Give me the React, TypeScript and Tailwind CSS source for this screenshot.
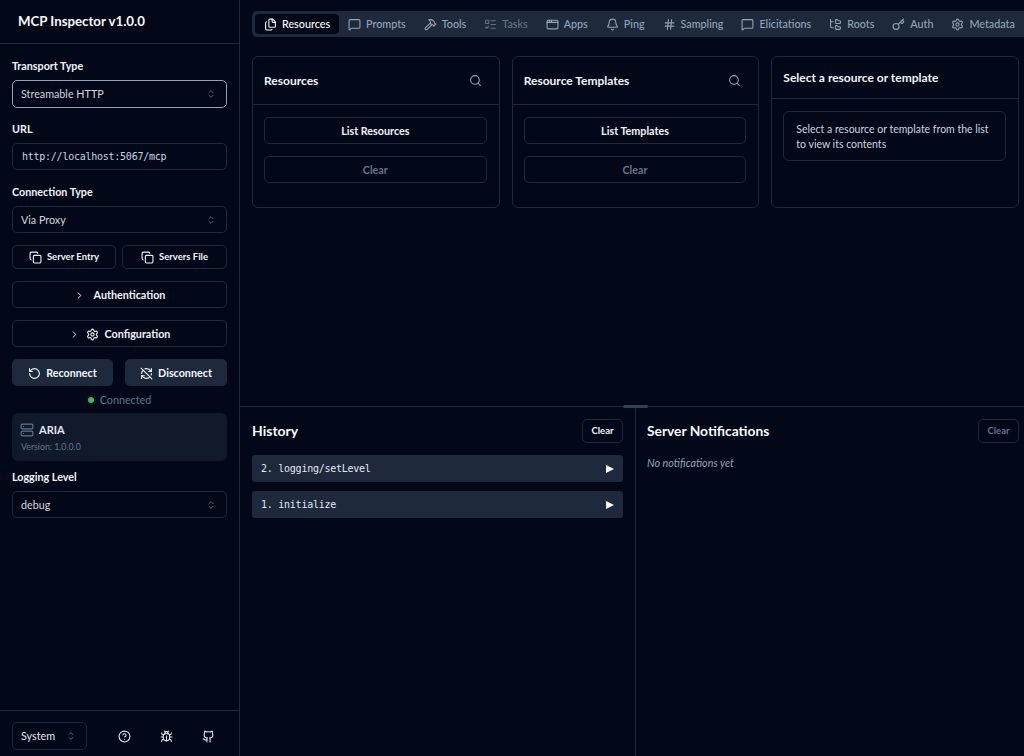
import {
  AppWindow,
  Bell,
  Bug,
  ChevronRight,
  ChevronsUpDown,
  CircleHelp,
  Copy,
  Files,
  FolderTree,
  Github,
  Hammer,
  Hash,
  Key,
  ListTodo,
  MessageSquare,
  RefreshCwOff,
  RotateCcw,
  Search,
  Server,
  Settings,
} from "lucide-react";
import React from "react";

const sans = "font-['Lato','Noto_Sans',sans-serif]";
const mono = "font-['DejaVu_Sans_Mono','Liberation_Mono',monospace]";

const tabs = [
  { name: "Resources", icon: Files, active: true },
  { name: "Prompts", icon: MessageSquare },
  { name: "Tools", icon: Hammer },
  { name: "Tasks", icon: ListTodo, disabled: true },
  { name: "Apps", icon: AppWindow },
  { name: "Ping", icon: Bell },
  { name: "Sampling", icon: Hash },
  { name: "Elicitations", icon: MessageSquare },
  { name: "Roots", icon: FolderTree },
  { name: "Auth", icon: Key },
  { name: "Metadata", icon: Settings },
];

const Label = ({ children }: { children: React.ReactNode }) => (
  <p className="text-[10.75px] leading-[14px] font-bold text-[#f1f5f9]">{children}</p>
);

const SelectBox = ({ value, focused }: { value: string; focused?: boolean }) => (
  <div
    className={`flex items-center justify-between rounded-[5px] border pl-[8px] pr-[10px] text-[10.75px] text-[#d4d7dd] ${
      focused ? "h-[28px] border-[#94a3b8]" : "h-[27px] border-[#1e293b] pt-[1px]"
    }`}
  >
    {value}
    <ChevronsUpDown size={10} className="text-[#64748b]" />
  </div>
);

const OutlineButton = ({
  children,
  className = "",
}: {
  children: React.ReactNode;
  className?: string;
}) => (
  <div
    className={`flex items-center justify-center rounded-[5px] border border-[#1e293b] pt-[1px] text-[10.75px] font-bold text-[#f1f5f9] ${className}`}
  >
    {children}
  </div>
);

const ListCard = ({ title, action }: { title: string; action: string }) => (
  <div className="flex h-[152px] flex-1 flex-col rounded-[6px] border border-[#1e293b]">
    <div className="flex h-[48px] items-center justify-between border-b border-[#1e293b] pl-[11px] pr-[17px]">
      <h3 className="text-[12px] font-bold text-[#f1f5f9]">{title}</h3>
      <Search size={13} className="text-[#94a3b8]" />
    </div>
    <div className="flex flex-col gap-[12px] pl-[11px] pr-[12px] pt-[12px]">
      <OutlineButton className="h-[27px]">{action}</OutlineButton>
      <OutlineButton className="h-[27px] !text-[#64748b]">Clear</OutlineButton>
    </div>
  </div>
);

const HistoryRow = ({ label }: { label: string }) => (
  <div className="flex h-[27px] items-center justify-between rounded-[3px] bg-[#1e293b] pl-[9px] pr-[9px]">
    <span className={`${mono} text-[10px] tracking-[-0.25px] text-[#e2e8f0]`}>{label}</span>
    <span className="h-0 w-0 border-y-[4px] border-l-[8px] border-y-transparent border-l-white" />
  </div>
);

export default function App() {
  return (
    <div className={`${sans} flex h-[756px] w-[1024px] overflow-hidden bg-[#020817]`}>
      <aside className="flex w-[240px] shrink-0 flex-col border-r border-[#1e293b]">
        <div className="flex h-[44px] shrink-0 items-center border-b border-[#1e293b] pl-[18px] text-[13.25px] font-bold text-[#f8fafc]">
          MCP Inspector v1.0.0
        </div>
        <div className="flex flex-1 flex-col px-[12px] pt-[15px]">
          <Label>Transport Type</Label>
          <div className="mt-[7px]">
            <SelectBox value="Streamable HTTP" focused />
          </div>
          <div className="mt-[14px]">
            <Label>URL</Label>
          </div>
          <div
            className={`${mono} mt-[7px] flex h-[27px] items-center rounded-[5px] border border-[#1e293b] pl-[9px] text-[10px] tracking-[-0.25px] text-[#cbd5e1]`}
          >
            http://localhost:5067/mcp
          </div>
          <div className="mt-[15px]">
            <Label>Connection Type</Label>
          </div>
          <div className="mt-[7px]">
            <SelectBox value="Via Proxy" />
          </div>
          <div className="mt-[12px] flex gap-[6px]">
            <OutlineButton className="h-[24px] w-[104px] gap-[5px] !pt-0 !text-[9.5px]">
              <Copy size={13} /> Server Entry
            </OutlineButton>
            <OutlineButton className="h-[24px] flex-1 gap-[5px] !pt-0 !text-[9.5px]">
              <Copy size={13} /> Servers File
            </OutlineButton>
          </div>
          <OutlineButton className="mt-[12px] h-[27px] gap-[9px]">
            <ChevronRight size={11} /> Authentication
          </OutlineButton>
          <OutlineButton className="mt-[12px] h-[27px] gap-[6px]">
            <ChevronRight size={11} />
            <Settings size={13} /> Configuration
          </OutlineButton>
          <div className="mt-[12px] flex gap-[12px]">
            <div className="flex h-[27px] w-[101px] items-center justify-center gap-[5px] rounded-[5px] bg-[#1e293b] pt-[1px] text-[10.75px] font-bold text-[#f1f5f9]">
              <RotateCcw size={13} /> Reconnect
            </div>
            <div className="flex h-[27px] flex-1 items-center justify-center gap-[5px] rounded-[5px] bg-[#1e293b] pt-[1px] text-[10.75px] font-bold text-[#f1f5f9]">
              <RefreshCwOff size={13} /> Disconnect
            </div>
          </div>
          <div className="mt-[7px] flex h-[14px] items-center justify-center gap-[6px] text-[10.75px] text-[#64748b]">
            <span className="h-[6px] w-[6px] rounded-full bg-[#22c55e]" />
            Connected
          </div>
          <div className="mt-[6px] flex h-[48px] flex-col justify-center gap-[2px] rounded-[6px] bg-[#111a2b] pl-[8px] pt-[1px]">
            <div className="flex items-center gap-[5px] text-[11px] font-bold text-[#e2e8f0]">
              <Server size={14} className="text-[#64748b]" />
              ARIA
            </div>
            <p className="pl-[1px] text-[8.75px] text-[#64748b]">Version: 1.0.0.0</p>
          </div>
          <div className="mt-[9px]">
            <Label>Logging Level</Label>
          </div>
          <div className="mt-[7px]">
            <SelectBox value="debug" />
          </div>
        </div>
        <div className="flex h-[46px] shrink-0 items-center border-t border-[#1e293b] pl-[12px] pt-[5px]">
          <div className="flex h-[28px] w-[75px] items-center justify-between rounded-[5px] border border-[#1e293b] pl-[8px] pr-[10px] text-[10.75px] text-[#e2e8f0]">
            System
            <ChevronsUpDown size={10} className="text-[#64748b]" />
          </div>
          <div className="ml-[31px] flex gap-[29px] text-[#e2e8f0]">
            <CircleHelp size={13} />
            <Bug size={13} />
            <Github size={13} />
          </div>
        </div>
      </aside>
      <main className="flex min-w-0 flex-1 flex-col">
        <div className="flex h-[406px] shrink-0 flex-col px-[12px] pt-[11px] pr-[5px]">
          <div className="mr-[-5px] flex h-[26px] items-center rounded-l-[5px] bg-[#1e293b] pl-[3px]">
            {tabs.map((tab) => {
              const Icon = tab.icon;
              return (
                <div
                  key={tab.name}
                  className={`flex h-[20px] items-center gap-[5px] rounded-[4px] px-[9px] text-[10.75px] font-medium whitespace-nowrap ${
                    tab.active
                      ? "bg-[#020817] text-[#f8fafc]"
                      : tab.disabled
                        ? "text-[#64748b]"
                        : "text-[#94a3b8]"
                  }`}
                >
                  <Icon size={13} />
                  {tab.name}
                </div>
              );
            })}
          </div>
          <div className="mt-[19px] flex gap-[12px]">
            <ListCard title="Resources" action="List Resources" />
            <ListCard title="Resource Templates" action="List Templates" />
            <div className="h-[152px] flex-1 rounded-[6px] border border-[#1e293b]">
              <div className="flex h-[42px] items-center border-b border-[#1e293b] pl-[11px] text-[12px] font-bold text-[#f1f5f9]">
                Select a resource or template
              </div>
              <div className="ml-[11px] mr-[12px] mt-[12px] h-[50px] rounded-[6px] border border-[#1e293b] px-[12px] pt-[10px] text-[10.5px] leading-[15px] text-[#cbd5e1]">
                Select a resource or template from the list to view its contents
              </div>
            </div>
          </div>
        </div>
        <div className="relative flex flex-1 border-t border-[#1e293b]">
          <span className="absolute left-[383px] top-[-2px] h-[3px] w-[25px] rounded-full bg-[#334155]" />
          <section className="w-[396px] shrink-0 border-r border-[#1e293b] px-[12px] pt-[12px]">
            <div className="flex h-[24px] items-center justify-between">
              <h2 className="pb-[2px] text-[14px] font-bold text-[#f8fafc]">History</h2>
              <OutlineButton className="h-[24px] w-[41px] !pt-0 !text-[9.5px]">Clear</OutlineButton>
            </div>
            <div className="mt-[12px] flex flex-col gap-[9px]">
              <HistoryRow label="2. logging/setLevel" />
              <HistoryRow label="1. initialize" />
            </div>
          </section>
          <section className="flex-1 pl-[11px] pr-[5px] pt-[12px]">
            <div className="flex h-[24px] items-center justify-between">
              <h2 className="text-[13.8px] font-bold text-[#f8fafc]">Server Notifications</h2>
              <OutlineButton className="h-[24px] w-[41px] !pt-0 !text-[9.5px] !text-[#64748b]">
                Clear
              </OutlineButton>
            </div>
            <p className="mt-[12px] text-[10.75px] italic text-[#94a3b8]">No notifications yet</p>
          </section>
        </div>
      </main>
    </div>
  );
}
